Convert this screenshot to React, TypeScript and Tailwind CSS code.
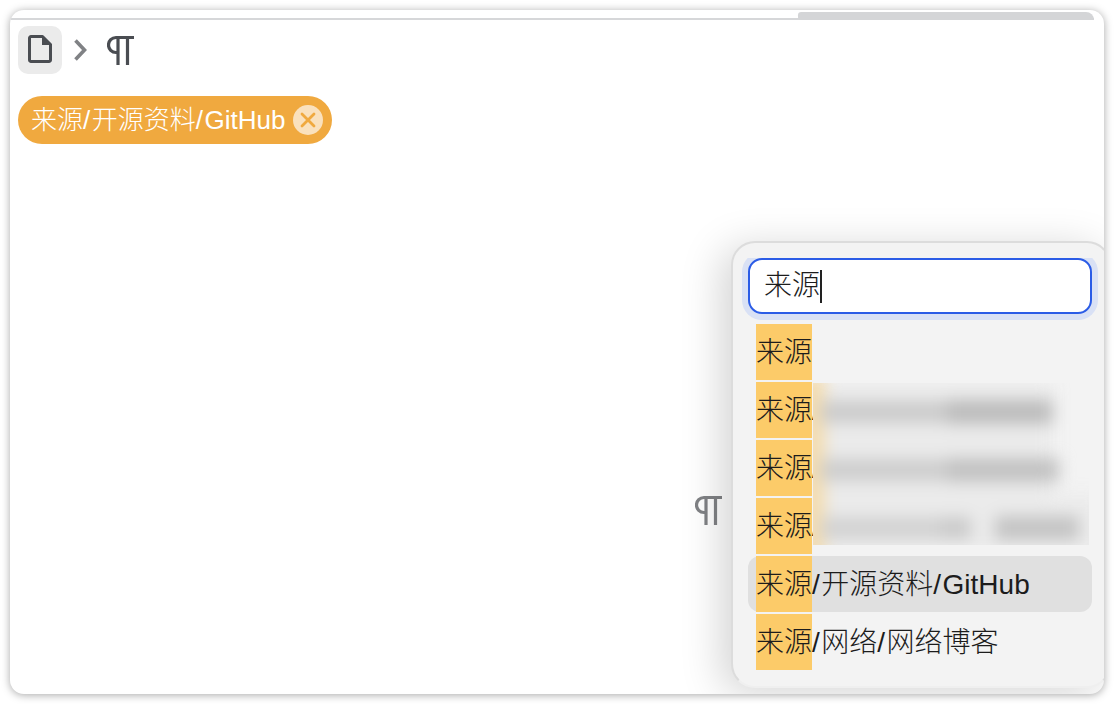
const font = { fontFamily: '"Liberation Sans", "Noto Sans CJK SC", sans-serif' };

function S() {
  return <span className="tracking-[1.5px]">/</span>;
}

function Para({ color, className }: { color: string; className?: string }) {
  return (
    <svg className={className} width="28" height="30" viewBox="0 0 28 30" fill="none" stroke={color} strokeWidth="3.2">
      <path d="M11 30V2.500M20.500 30V2.500M27 2.500H9a7.500 7.500 0 0 0 0 15H11" />
    </svg>
  );
}

function Row({ children, selected, sliver }: { children?: React.ReactNode; selected?: boolean; sliver?: boolean }) {
  return (
    <div className={`flex h-14 items-center rounded-xl pl-2 text-[28px] font-light leading-none text-[#1c1c1c] ${selected ? "bg-[#e0e0e0]" : ""}`}>
      <span className="flex h-14 w-14 shrink-0 items-center whitespace-nowrap bg-[#fccb69] pt-0.5">来源</span>
      <span className="whitespace-nowrap pt-0.5">{sliver ? <S /> : children}</span>
    </div>
  );
}

function BlurLine({ segs }: { segs: string[] }) {
  return (
    <div className="flex h-[58px] items-center pl-2">
      {segs.map((c) => (
        <div key={c} className={c} />
      ))}
    </div>
  );
}

export default function App() {
  return (
    <div className="h-[704px] w-[1114px] overflow-hidden bg-white p-2.5" style={font}>
      <div className="relative flex h-[684px] w-[1094px] flex-col overflow-hidden rounded-[14px] bg-white shadow-[0_1px_8px_rgba(0,0,0,0.35)]">
        <div className="mr-2.5 h-2.5 shrink-0 pt-2">
          <div className="relative h-0.5 w-full bg-[#d6d7d9]">
            <div className="absolute bottom-0 right-0 h-2 w-[296px] rounded-l-sm rounded-tr-[10px] bg-[#d4d5d7]" />
          </div>
        </div>
        <div className="mt-1.5 flex h-12 shrink-0 items-center pl-2">
          <div className="flex h-12 w-11 items-center justify-center rounded-[10px] bg-[#ebebeb] pb-0.5">
            <svg width="24" height="28" viewBox="0 0 24 28" fill="none" stroke="#4a4d52" strokeWidth="3" strokeLinejoin="round">
              <path d="M1.500 3a1.500 1.500 0 0 1 1.500-1.500H14.500L22.500 9.500V25a1.500 1.500 0 0 1-1.500 1.500H3A1.500 1.500 0 0 1 1.500 25Z" />
              <path d="M14 2V10H22.500Z" fill="#4a4d52" stroke="none" />
            </svg>
          </div>
          <svg className="ml-3" width="13" height="22" viewBox="0 0 13 22" fill="none" stroke="#808285" strokeWidth="3.600">
            <path d="M1.500 1.500l9 9.500-9 9.500" />
          </svg>
          <Para className="ml-5" color="#4a4d52" />
        </div>
        <div className="mt-[22px] flex pl-2">
          <div className="flex h-12 items-center rounded-full bg-[#f0a93f] pl-[13px] pr-[9px] text-[26px] font-light leading-none text-white">
            <span className="whitespace-nowrap">
              来源<S />开源资料<S />GitHub
            </span>
            <span className="ml-2 flex h-[30px] w-[30px] items-center justify-center rounded-full bg-[#fae1bd]">
              <svg width="16" height="16" viewBox="0 0 16 16" stroke="#f0a93f" strokeWidth="2.800" strokeLinecap="round">
                <path d="M2 2l12 12M14 2L2 14" />
              </svg>
            </span>
          </div>
        </div>

        <Para className="absolute left-[685px] top-[485px]" color="#808285" />

        <div className="absolute left-[721px] top-[231px] h-[447px] w-[380px] rounded-[24px] border-2 border-[#dcdcdc] border-b-[#efefef] bg-[#f3f3f3] shadow-[-10px_6px_40px_rgba(0,0,0,0.17)]">
          <div className="ml-[9px] mt-[15px] w-[356px] overflow-hidden pb-1.5">
            <div className="mx-1.5 flex h-14 items-center rounded-[14px] border-2 border-[#2b5ce6] bg-white pl-3.5 text-[28px] font-light leading-none text-[#1c1c1c] shadow-[0_0_0_6px_#d9e1f5]">
              来源<span className="h-[33px] w-0.5 bg-[#222]" />
            </div>
          </div>
          <div className="relative ml-[15px] mt-1 flex w-[344px] flex-col gap-0.5">
            <Row />
            <Row sliver />
            <Row sliver />
            <Row sliver />
            <Row selected>
              <S />开源资料<S />GitHub
            </Row>
            <Row>
              <S />网络<S />网络博客
            </Row>
            <div className="absolute left-[65px] top-[59px] h-[162px] w-[276px] overflow-hidden bg-[#f3f3f3]">
              <div className="blur-[8px]">
                <div className="absolute left-0 top-0 h-[112px] w-[240px] bg-[#ebebeb]" />
                <div className="absolute left-0 top-[112px] h-[60px] w-[290px] bg-[#ebebeb]" />
                <div className="absolute -left-3 -top-2 h-[190px] w-6 bg-[#f3dcb0]" />
                <div className="relative">
                  <BlurLine segs={["h-[22px] w-[126px] bg-[#cbcbcb]", "h-[24px] w-[106px] bg-[#bcbcbc]"]} />
                  <BlurLine segs={["h-[22px] w-[126px] bg-[#cdcdcd]", "h-[24px] w-[112px] bg-[#c2c2c2]"]} />
                  <BlurLine segs={["h-[22px] w-[120px] bg-[#d2d2d2]", "h-[22px] w-[30px] bg-[#cacaca]", "ml-6 h-[24px] w-[84px] bg-[#c4c4c4]"]} />
                </div>
              </div>
            </div>
          </div>
        </div>
      </div>
    </div>
  );
}
